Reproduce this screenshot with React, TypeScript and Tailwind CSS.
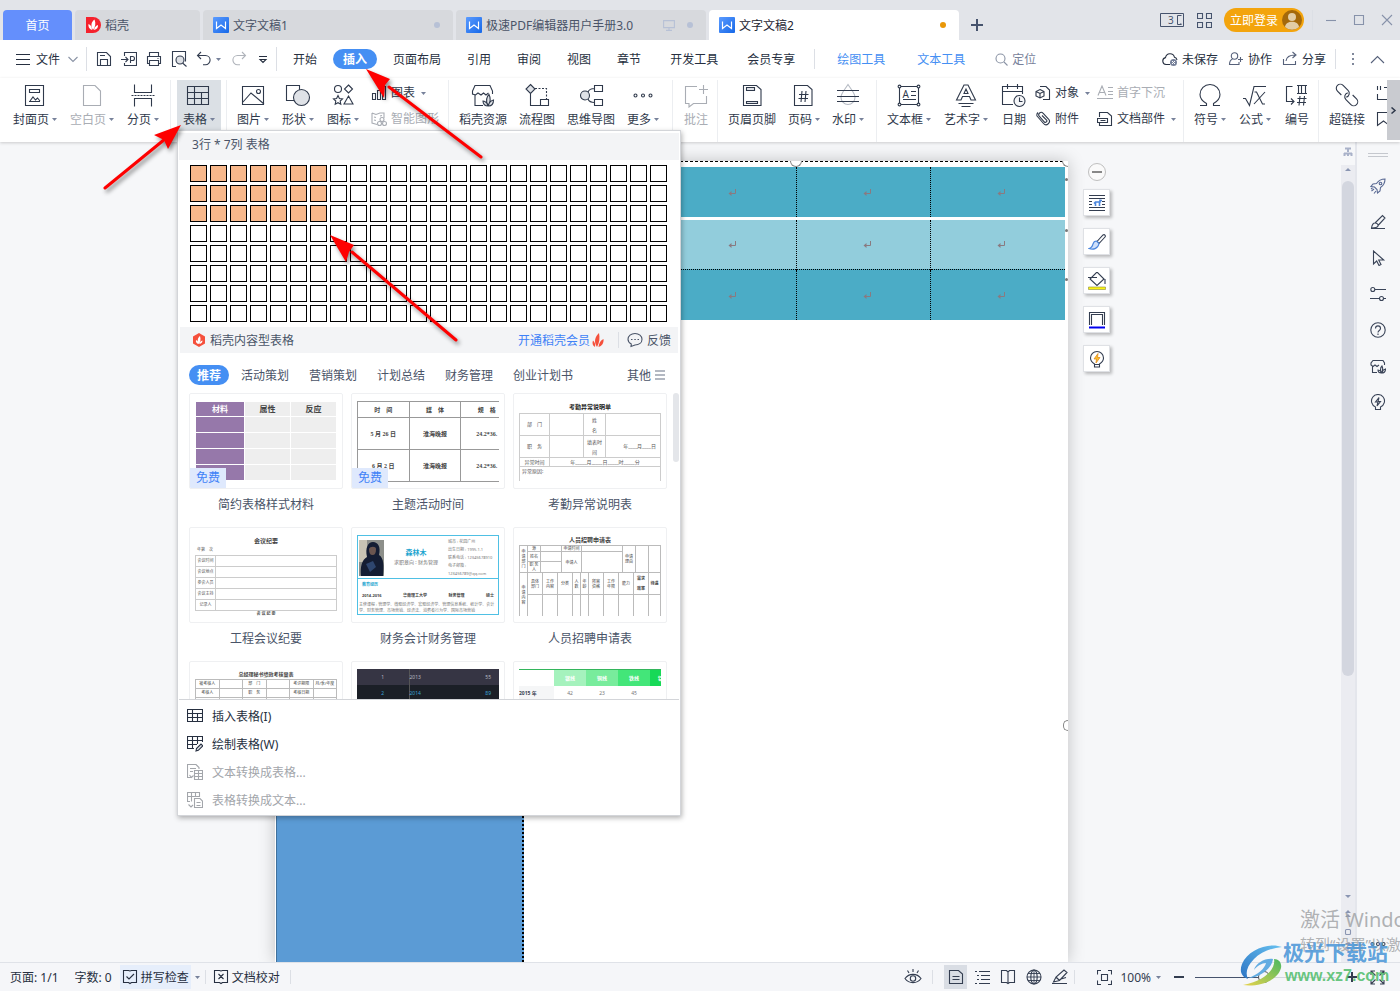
import { useState, type ReactNode } from "react";

const COLS = 24;
const ROWS = 8;

interface IconProps {
  size?: number;
  className?: string;
  children: ReactNode;
}

function Icon({ size = 16, className = "", children }: IconProps) {
  return (
    <svg
      width={size}
      height={size}
      viewBox={`0 0 ${size} ${size}`}
      fill="none"
      stroke="currentColor"
      strokeWidth={1.1}
      className={`shrink-0 ${className}`}
      aria-hidden="true"
    >
      {children}
    </svg>
  );
}

function Caret({ className = "" }: { className?: string }) {
  return (
    <svg width="5" height="3" viewBox="0 0 5 3" className={`shrink-0 ${className}`} aria-hidden="true">
      <path d="M0 0h5L2.5 3z" fill="#77819a" />
    </svg>
  );
}

function Divider({ className = "h-5" }: { className?: string }) {
  return <span className={`w-px shrink-0 bg-[#dcdfe5] ${className}`} />;
}

/* ---------- title bar ---------- */

function WpsLogo() {
  return (
    <svg width="16" height="16" viewBox="0 0 16 16" className="shrink-0" aria-hidden="true">
      <defs>
        <linearGradient id="wps" x1="0" y1="0" x2="1" y2="1">
          <stop offset="0" stopColor="#5b9bff" />
          <stop offset="1" stopColor="#1668e8" />
        </linearGradient>
      </defs>
      <rect width="16" height="16" rx="1" fill="url(#wps)" />
      <path d="M3.500 4.500v7L8 8l4.500 3.500v-7" fill="none" stroke="#fff" strokeWidth="1.2" />
    </svg>
  );
}

function DocerLogo() {
  return (
    <svg width="16" height="16" viewBox="0 0 16 16" className="shrink-0" aria-hidden="true">
      <path d="M1 0h7a8 8 0 0 1 0 16H1z" fill="#f5222d" />
      <path d="M8 13C5.500 9 6 5 9.500 2.500 11 6 10.500 10 8 13zM7 13C4 12 3 9.500 3.500 7 6 8 7 10 7 13zM9 13c.3-2.500 1.500-4 4-5 .2 2.500-1 4.500-4 5z" fill="#fff" />
    </svg>
  );
}

function TitleBar() {
  return (
    <header className="flex h-10 shrink-0 items-end gap-[3px] bg-[#e2e4e9] pl-[3px] text-xs/[17px] text-[#4a5468]">
      <button className="h-[30px] w-[69px] shrink-0 rounded-t bg-[#648ffc] text-white">首页</button>
      <button className="flex h-[30px] w-[125px] shrink-0 items-center gap-1 rounded-t bg-[#d7d9dd] px-2.5">
        <DocerLogo />稻壳
      </button>
      <button className="flex h-[30px] w-[250px] shrink-0 items-center gap-1 rounded-t bg-[#d7d9dd] px-2.5">
        <WpsLogo />
        文字文稿1
        <span className="mr-[3px] ml-auto size-1.5 rounded-full bg-[#b7c1d6]" />
      </button>
      <button className="flex h-[30px] w-[250px] shrink-0 items-center gap-1 rounded-t bg-[#d7d9dd] px-2.5">
        <WpsLogo />
        极速PDF编辑器用户手册3.0
        <Icon size={12} className="ml-auto text-[#b7c1d6]">
          <path d="M.6 1.600h10.800v7H.6zM6 9v2M3 11.400h6" />
        </Icon>
        <span className="mr-[3px] ml-2 size-1.5 rounded-full bg-[#b7c1d6]" />
      </button>
      <button className="flex h-[30px] w-[250px] shrink-0 items-center gap-1 rounded-t bg-white px-2.5 text-[#1f2633]">
        <WpsLogo />
        文字文稿2
        <span className="mr-[3px] ml-auto size-1.5 rounded-full bg-[#e99708]" />
      </button>
      <button aria-label="新建" className="ml-[9px] flex h-[30px] items-center text-[#46536d]">
        <Icon size={12}><path d="M6 0v12M0 6h12" strokeWidth="2" /></Icon>
      </button>
      <div className="ml-auto flex h-full shrink-0 items-center pr-[7px] text-[#46536d]">
        <button aria-label="窗口" className="mr-3">
          <svg width="25" height="16" viewBox="0 0 25 16" fill="none" stroke="currentColor" aria-hidden="true">
            <path d="M.5 1.500h23v13H.5zM21.500 3.500h-4v9h4M20 12h1.500" />
            <text x="8" y="12" fontSize="10" fill="currentColor" stroke="none">3</text>
          </svg>
        </button>
        <button aria-label="应用" className="mr-3">
          <Icon size={15}>
            <path d="M.5.5h5v5h-5zM9.500.5h5v5h-5zM.5 9.500h5v5h-5zM9.500 9.500h5v5h-5z" />
          </Icon>
        </button>
        <button className="flex h-6 items-center gap-1 rounded-full bg-[#f3a40d] pr-0.5 pl-1.5 text-white">
          立即登录
          <svg width="20" height="20" viewBox="0 0 20 20" aria-hidden="true">
            <circle cx="10" cy="10" r="10" fill="#a4690b" />
            <circle cx="10" cy="7" r="4" fill="#e2cda6" />
            <path d="M3 17c.5-7 13.500-7 14 0a10 10 0 0 1-14 0z" fill="#e2cda6" />
          </svg>
        </button>
        <Divider className="mr-3 ml-2 h-5 bg-[#c8ccd4]" />
        <button aria-label="最小化" className="mr-4 text-[#8792aa]"><Icon size={12}><path d="M1 6.500h10" /></Icon></button>
        <button aria-label="最大化" className="mr-4 text-[#8792aa]"><Icon size={12}><path d="M1.500 1.500h9v9h-9z" /></Icon></button>
        <button aria-label="关闭" className="text-[#8792aa]"><Icon size={12}><path d="m1 1 10 10M11 1 1 11" /></Icon></button>
      </div>
    </header>
  );
}

/* ---------- menu row ---------- */

const MENUS = ["页面布局", "引用", "审阅", "视图", "章节"];
const MORE_MENUS = ["开发工具", "会员专享"];

function MenuRow() {
  return (
    <nav className="flex h-[38px] shrink-0 items-center bg-white text-xs/[17px] text-[#262f40]">
      <button className="flex items-center pl-4">
        <Icon size={14} className="mr-1.5"><path d="M0 2.500h14M0 7.500h14M0 12.500h14" /></Icon>
        文件
        <Icon size={10} className="ml-2 text-[#8a93a5]"><path d="m.5 3 4.500 4.500L9.500 3" /></Icon>
      </button>
      <Divider className="mr-[9px] ml-2 h-6" />
      <div className="flex items-center gap-[9px] text-[#333d50]">
        <button aria-label="保存">
          <Icon><path d="M1.500 1.500h9l4 4v9h-13zM4.500 14V8.500h7V14M4 4.500h5" /></Icon>
        </button>
        <button aria-label="输出PDF">
          <Icon><path d="M3.500 5V1.500h12v13h-12V12M0 8.500h7M4.500 6 7 8.500 4.500 11M9.500 12V5.500h2a2 2 0 0 1 0 4h-2" /></Icon>
        </button>
        <button aria-label="打印">
          <Icon><path d="M3.500 5V1.500h9V5M3.500 12.500h-2v-7h13v7h-2M3.500 9.500h9v5h-9zM11.500 7.500h1" /></Icon>
        </button>
        <button aria-label="打印预览">
          <Icon>
            <path d="M5 15.500H1.500V.5h13v10M11.500 12l4 3.500" />
            <circle cx="9" cy="9" r="4" fill="#dde0e5" />
          </Icon>
        </button>
        <button aria-label="撤销"><Icon><path d="M5 1 1.500 4.500 5 8M2 4.500h7.500a4.600 4.600 0 0 1 0 9.200H7" /></Icon></button>
      </div>
      <Caret className="ml-1" />
      <button aria-label="恢复" className="ml-2.5 text-[#b0b4bb]">
        <Icon><path d="m11 1 3.500 3.500L11 8M14 4.500H6.500a4.600 4.600 0 0 0 0 9.200H9" /></Icon>
      </button>
      <button aria-label="自定义" className="ml-[11px]"><Icon size={10}><path d="M1 2.500h8M2 5.500h6L5 8.500z" /></Icon></button>
      <Divider className="mr-1 ml-2 h-6" />
      <button className="px-3">开始</button>
      <button className="mx-1 h-5 rounded-full bg-[#458ff3] px-2.5 font-bold text-white">插入</button>
      {MENUS.map((m, i) => (
        <button key={m} className={i === 0 ? "pr-[13px] pl-3 whitespace-nowrap" : "px-[13px] whitespace-nowrap"}>{m}</button>
      ))}
      {MORE_MENUS.map((m) => (
        <button key={m} className="ml-[3px] px-[13px] whitespace-nowrap">{m}</button>
      ))}
      <Divider className="mx-[6px] h-5" />
      <button className="px-4 whitespace-nowrap text-[#458ff3]">绘图工具</button>
      <button className="px-4 whitespace-nowrap text-[#458ff3]">文本工具</button>
      <label className="ml-3.5 flex items-center gap-1 text-[#8a93a5]">
        <Icon size={13}><circle cx="5.500" cy="5.500" r="4.500" /><path d="m9 9 3.500 3.500" /></Icon>
        <input aria-label="定位" placeholder="定位" className="w-12 bg-transparent outline-none placeholder:text-[#77819a]" />
      </label>
      <div className="ml-auto flex shrink-0 items-center pr-[15px] whitespace-nowrap">
        <button className="flex items-center gap-1">
          <Icon>
            <path d="M8 13.500H4A3.500 3.500 0 0 1 3.500 6.600a4.600 4.600 0 0 1 9-.3A3.500 3.500 0 0 1 15 9" />
            <circle cx="11.500" cy="11.500" r="3.500" fill="#77819a" stroke="none" />
            <path d="m10 10 3 3M13 10l-3 3" stroke="#fff" strokeWidth="1" />
          </Icon>
          未保存
        </button>
        <button className="ml-[10px] flex items-center gap-1">
          <Icon className="text-[#56617a]">
            <circle cx="6.500" cy="5" r="3.200" />
            <path d="M4.500 8C2 9 1.500 11 1.500 13.500h9.500V11M12.500 6v5M10 8.500h5" />
          </Icon>
          协作
        </button>
        <button className="ml-[10px] flex items-center gap-1">
          <Icon className="text-[#56617a]">
            <path d="M1.500 8v5.500h12V10M4 10c.5-4 3-6 9-6M10.500 1 14 4l-3.500 3" />
          </Icon>
          分享
        </button>
        <Divider className="ml-[9px] h-5" />
        <button aria-label="更多" className="mx-[10px] text-[#56617a]">
          <Icon size={14}>
            <g fill="currentColor" stroke="none">
              <circle cx="7" cy="2" r="1" /><circle cx="7" cy="7" r="1" /><circle cx="7" cy="12" r="1" />
            </g>
          </Icon>
        </button>
        <button aria-label="收起" className="text-[#56617a]"><Icon size={15}><path d="m1 11 6.500-6.500L14 11" /></Icon></button>
      </div>
    </nav>
  );
}

/* ---------- ribbon ---------- */

const G = "#dfe2e7";

const big: Record<string, ReactNode> = {
  cover: <path d="M3.500 3.500h18v20h-18zM7.500 7.500h10v3h-10zM7 19.500h11M8 19l3-4 2.500 3 2-2 2.500 3" />,
  blank: <path d="M4.500 3.500H16l5.500 5.500v14.500h-17z" />,
  pageBreak: <><path d="M4.500 2.500v8h17v-8M4.500 24.500v-8h17v8" /><path d="M1.500 13.500h24" strokeDasharray="2 1" /></>,
  table: <path d="M1.500 4.500h21v18h-21zM1.500 10.500h21M1.500 16.500h21M8.500 4.500v18M15.500 10.500v12" />,
  picture: <><path d="M2.500 4.500h21v18h-21zM3 20l8-9 13 11" /><circle cx="18.500" cy="9.500" r="2" /></>,
  shapes: <><path d="M1.500 3.500h13v15h-13z" /><circle cx="16.500" cy="15.500" r="8" fill={G} /></>,
  icons: (
    <>
      <circle cx="8" cy="7" r="3.500" />
      <path d="m18.500 3 4 4-4 4-4-4zM8 13.500l1.400 3 3.100.4-2.300 2.100.6 3.200L8 20.700l-2.800 1.500.6-3.200-2.300-2.100 3.100-.4zM18.500 14l4.500 8h-9z" />
    </>
  ),
  store: (
    <>
      <path d="M13 23.500H5V13M22.500 12V9L20 3.500H5L2.500 9v3l3 1 2.500-2 3 2 2.500-2 2.500 2 2.500-2" />
      <path d="M17.500 23c-1.500-4-1-8 1.500-10.500 1.500 3 1.500 7-.5 10.500-2-2.500-4-4-5.500-4 0 3 2 5 5.500 5 3 0 5-2 5-6-2.500.5-4 2-5 5z" fill={G} />
    </>
  ),
  flow: (
    <>
      <path d="m6.500 2.500 4.500 4.500-4.500 4.500L2 7z" fill={G} />
      <path d="M11 6.500h11.500v11" strokeDasharray="2 1.500" />
      <path d="M6.500 11.500v12h10M16.500 17.500h8v6h-8z" />
    </>
  ),
  mind: (
    <>
      <circle cx="7" cy="13.500" r="4.500" fill={G} />
      <path d="M16.500 3.500h8v6h-8zM16.500 17.500h8v6h-8zM16.500 6.500C13 6.500 11 7.500 10 10M16.500 20.500C13 20.500 11 19.500 10 17" />
    </>
  ),
  more: <><circle cx="5.500" cy="13.500" r="1.500" /><circle cx="13" cy="13.500" r="1.500" /><circle cx="20.500" cy="13.500" r="1.500" /></>,
  comment: <path d="M14 4.500H2.500v17H6V25l4.500-3.500h13V14M20.500 3v9M16 7.500h9" />,
  headfoot: <><path d="M4.500 3.500h13l4.500 4v16H4.500z" /><path d="M7.500 5.500h8v3h-8zM7.500 19.500h11v2h-11z" fill={G} /></>,
  pageNum: <path d="M3.500 3.500h13l4.500 4v16H3.500zM8 12.500h9.500M7.500 16.500H17M11 9l-1 11M15 9l-1 11" />,
  watermark: (
    <>
      <path d="M13 2.500c3 5 7 8.500 7 13a7 7 0 0 1-14 0c0-4.500 4-8 7-13z" stroke="#b5bac3" />
      <path d="M2 8.500h22M2 14.500h22M2 19.500h22" />
    </>
  ),
  textbox: (
    <>
      <path d="M3.500 4.500h19v18h-19zM15 9.500h5M15 13.500h5M7 17.500h13" />
      <g fill="#fff"><circle cx="3.500" cy="4.500" r="1.400" /><circle cx="22.500" cy="4.500" r="1.400" /><circle cx="3.500" cy="22.500" r="1.400" /><circle cx="22.500" cy="22.500" r="1.400" /></g>
      <text x="6.500" y="15.500" fontSize="10" fill="currentColor" stroke="none">A</text>
    </>
  ),
  wordart: (
    <>
      <path d="M3.500 18 11 3h4l7.500 15H18l-1.500-3.500h-7L8 18zM11 11.500h4L13 7z" />
      <path d="M5.500 21.500h15M8.500 24.500h9" />
    </>
  ),
  date: (
    <>
      <path d="M12 22.500H1.500v-18h20V12M1.500 9.500h20M6.500 2v5M16.500 2v5" />
      <circle cx="18.500" cy="19" r="5.500" fill="#f5f6f8" />
      <path d="M18.500 15.500v4h3" />
    </>
  ),
  omega: <path d="M3 23.500h6.500v-2C5 19 3 16.500 3 12.500a10 10 0 0 1 20 0c0 4-2 6.500-6.500 9v2H23" />,
  formula: <path d="M1 16.500h2.500l4 7 4.500-19h12M12.500 10h2l6 12h2.500M23 10l-11 12" />,
  numbering: (
    <path d="M8.500 4.500h-6v15H10M7 16.500l3 3-3 3M13 3.500h10M13 11.500h10M14.500 3.500v8M17.500 3.500v8M21.500 3.500v8M13.500 16.500h9M13 20.500h9M16 14l-1 9.500M20.500 14l-1 9.500" />
  ),
  link: (
    <g transform="rotate(45 13 13)">
      <path d="M9 17H3.500a4 4 0 0 1 0-8h7a4 4 0 0 1 3.500 6" />
      <path d="M17 9h5.500a4 4 0 0 1 0 8h-7a4 4 0 0 1-3.500-6" />
    </g>
  ),
};

interface BigButtonProps {
  icon: string;
  label: string;
  caret?: boolean;
  disabled?: boolean;
  active?: boolean;
  onClick?: () => void;
}

function BigButton({ icon, label, caret, disabled, active, onClick }: BigButtonProps) {
  return (
    <button
      disabled={disabled}
      onClick={onClick}
      className={[
        "flex h-[50px] shrink-0 flex-col items-center px-[6px] pt-[2px]",
        active ? "bg-[#dbe0e5]" : "",
        disabled ? "text-[#a9adb4]" : "text-[#2f394b]",
      ].join(" ")}
    >
      <Icon size={26}>{big[icon]}</Icon>
      <span className="mt-[3px] flex items-center gap-[3px] whitespace-nowrap">
        {label}
        {caret && <Caret />}
      </span>
    </button>
  );
}

function SmallButton({ label, caret, disabled, children }: { label: string; caret?: boolean; disabled?: boolean; children: ReactNode }) {
  return (
    <button
      disabled={disabled}
      className={[
        "flex h-[26px] items-center gap-[4px] leading-4 whitespace-nowrap",
        disabled ? "text-[#a9adb4]" : "text-[#2f394b]",
      ].join(" ")}
    >
      <Icon>{children}</Icon>
      {label}
      {caret && <Caret className="ml-0.5" />}
    </button>
  );
}

function Ribbon() {
  const [open, setOpen] = useState(true);
  return (
    <div className="relative z-20 flex h-16 shrink-0 bg-white pt-[2px] text-xs/[17px] shadow-[0_1px_3px_rgba(0,0,0,0.18)]">
      <div className="flex w-[171px] shrink-0 gap-px border-r border-[#eceef1] pl-[7px]">
        <BigButton icon="cover" label="封面页" caret />
        <BigButton icon="blank" label="空白页" caret disabled />
        <BigButton icon="pageBreak" label="分页" caret />
      </div>
      <div className="relative flex w-[56px] shrink-0 border-r border-[#eceef1] pl-[6px]">
        <BigButton icon="table" label="表格" caret active onClick={() => setOpen(!open)} />
        {open && <TablePanel />}
      </div>
      <div className="flex w-[222px] shrink-0 gap-px border-r border-[#eceef1] pl-[4px]">
        <BigButton icon="picture" label="图片" caret />
        <BigButton icon="shapes" label="形状" caret />
        <BigButton icon="icons" label="图标" caret />
        <div className="ml-[5px]">
          <SmallButton label="图表" caret><path d="M1.500 8.500h3v6h-3zM6.500 5.500h3v9h-3zM11.500 1.500h3v13h-3z" /></SmallButton>
          <SmallButton label="智能图形" disabled>
            <path d="M1 2l4 1.500L9 2h4v5M1 2v10l5 1.500M3 6l2 .5M3 9l2 .5M9 5l2-.5" />
            <circle cx="11" cy="8.500" r="2" /><circle cx="8.500" cy="12.500" r="2" /><circle cx="13.500" cy="12.500" r="2" />
          </SmallButton>
        </div>
      </div>
      <div className="flex w-[224px] shrink-0 border-r border-[#eceef1] pl-[4px]">
        <BigButton icon="store" label="稻壳资源" />
        <BigButton icon="flow" label="流程图" />
        <BigButton icon="mind" label="思维导图" />
        <BigButton icon="more" label="更多" caret />
      </div>
      <div className="flex w-[45px] shrink-0 border-r border-[#eceef1] pl-[4px]">
        <BigButton icon="comment" label="批注" disabled />
      </div>
      <div className="flex w-[159px] shrink-0 border-r border-[#eceef1] pl-[4px]">
        <BigButton icon="headfoot" label="页眉页脚" />
        <BigButton icon="pageNum" label="页码" caret />
        <BigButton icon="watermark" label="水印" caret />
      </div>
      <div className="flex w-[307px] shrink-0 gap-px border-r border-[#eceef1] pl-[4px]">
        <BigButton icon="textbox" label="文本框" caret />
        <BigButton icon="wordart" label="艺术字" caret />
        <BigButton icon="date" label="日期" />
        <div className="ml-px">
          <SmallButton label="对象" caret>
            <path d="M5 1.500h6l3.500 3.500v9.500H8" />
            <path d="m5 4.500 4 2v4.500l-4 2-4-2V6.500zM1 6.500l4 2 4-2M5 8.500V13" fill="#fff" />
          </SmallButton>
          <SmallButton label="附件">
            <path d="m2 5 6.500 7.500a3.300 3.300 0 0 0 5-4.500L8 2.200a2.400 2.400 0 0 0-3.600 3.200l5 5.600a1.500 1.500 0 0 0 2.200-2L7 4.500M2 5a3.500 3.500 0 0 1 1-3.500" />
          </SmallButton>
        </div>
        <div className="ml-[6px]">
          <SmallButton label="首字下沉" disabled>
            <path d="M1 10.500 5 1l4 9.500M2.500 7.500h5M11 2.500h5M11 6.500h5M11 9.500h5M0 13.500h16" />
          </SmallButton>
          <SmallButton label="文档部件" caret>
            <path d="M2.500 6V1.500h8L14.500 5v9.500h-12V12M.5 7.500h10v4H.5zM3.500 9.500h5" />
          </SmallButton>
        </div>
      </div>
      <div className="flex w-[135px] shrink-0 gap-px border-r border-[#eceef1] pl-[4px]">
        <BigButton icon="omega" label="符号" caret />
        <BigButton icon="formula" label="公式" caret />
        <BigButton icon="numbering" label="编号" />
      </div>
      <div className="flex min-w-0 flex-1 overflow-hidden pl-[4px]">
        <BigButton icon="link" label="超链接" />
        <div className="ml-1 min-w-0 flex-1 overflow-hidden text-[#2f394b]">
          <button aria-label="引用" className="flex h-[26px] items-center">
            <Icon><path d="M2.500 1v4M5.500 1v4M2.500 9v5.500h12M9 2.500h6" /></Icon>
          </button>
          <button aria-label="书签" className="flex h-[26px] items-center">
            <Icon><path d="M2.500 1.500h12v13l-6-4.500-6 4.500z" /></Icon>
          </button>
        </div>
      </div>
      <button aria-label="向右" className="flex h-[60px] w-[13px] shrink-0 items-center justify-center bg-[#c9cbd0] text-[#2f394b]">
        <Icon size={7}><path d="m1.500.5 3.500 3-3.500 3" strokeWidth="1.500" /></Icon>
      </button>
    </div>
  );
}

/* ---------- table drop-down ---------- */

const TABS = ["活动策划", "营销策划", "计划总结", "财务管理", "创业计划书"];

function MaterialThumb() {
  return (
    <table className="h-[80px] w-full table-fixed border-separate border-spacing-px text-center text-[8px] leading-none font-bold text-[#444]">
      <tbody>
        <tr>
          <td className="w-[48px] bg-[#9678aa] p-0 text-white">材料</td>
          <td className="bg-[#eee] p-0">属性</td>
          <td className="bg-[#eee] p-0">反应</td>
        </tr>
        {[0, 1, 2, 3].map((i) => (
          <tr key={i} className="h-[15px]">
            <td className="bg-[#9678aa] p-0" /><td className="bg-[#eee] p-0" /><td className="bg-[#eee] p-0" />
          </tr>
        ))}
      </tbody>
    </table>
  );
}

function ScheduleThumb() {
  const rows = [
    ["时　间", "媒　体", "规　格"],
    ["5 月 26 日", "淮海晚报", "24.2*36."],
    ["6 月 2 日", "淮海晚报", "24.2*36."],
  ];
  return (
    <table className="h-[80px] w-[156px] table-fixed border-collapse text-center font-['Liberation_Serif','Noto_Sans_CJK_SC',serif] text-[6px] leading-none font-bold text-[#444]">
      <tbody>
        {rows.map((r, i) => (
          <tr key={i} className={i === 0 ? "h-[16px]" : "h-[32px]"}>
            {r.map((c) => <td key={c} className="border border-[#999] p-0">{c}</td>)}
          </tr>
        ))}
      </tbody>
    </table>
  );
}

function AttendanceThumb() {
  return (
    <div className="text-center text-[5px] leading-none text-[#555]">
      <p className="mb-[2px] pt-[2px] text-[6px] leading-[8px] font-bold text-[#222]">考勤异常说明单</p>
      <table className="h-[68px] w-full table-fixed border-collapse">
        <tbody>
          <tr className="h-[22px]">
            <td className="w-[30px] border border-[#ccc] p-0">部　门</td>
            <td className="w-[34px] border border-[#ccc] p-0" />
            <td className="w-[22px] border border-[#ccc] p-0 leading-[10px]">姓<br />名</td>
            <td className="border border-[#ccc] p-0" />
          </tr>
          <tr className="h-[22px]">
            <td className="border border-[#ccc] p-0">职　务</td>
            <td className="border border-[#ccc] p-0" />
            <td className="border border-[#ccc] p-0 leading-[10px]">填表时<br />间</td>
            <td className="border border-[#ccc] p-0 pr-1 text-right">年____月____日</td>
          </tr>
          <tr className="h-[9px]">
            <td className="border border-[#ccc] p-0">异常时间</td>
            <td colSpan={3} className="border border-[#ccc] p-0">年_____月_____日_____时_____分</td>
          </tr>
          <tr>
            <td colSpan={4} className="border-x border-[#ccc] p-[2px] text-left align-top">异常原因:</td>
          </tr>
        </tbody>
      </table>
    </div>
  );
}

function MeetingThumb() {
  return (
    <div className="text-[4px] leading-none text-[#555]">
      <p className="pt-[2px] text-center text-[6px] leading-[8px] font-bold text-[#444]">会议纪要</p>
      <p className="py-[3px] pl-[2px]">年第　次</p>
      <table className="w-full table-fixed border-collapse text-center">
        <tbody>
          {["会议时间", "会议地点", "参会人员", "会议主持", "记录人"].map((t) => (
            <tr key={t} className="h-[11px]">
              <td className="w-[20px] border border-[#ccc] p-0">{t}</td>
              <td className="border border-[#ccc] p-0" />
            </tr>
          ))}
        </tbody>
      </table>
      <p className="pt-[1px] text-center font-bold">会 议 纪 要</p>
    </div>
  );
}

function ResumeThumb() {
  return (
    <div className="h-[80px] border border-[#4fc0e4] text-[4px] leading-none text-[#777]">
      <div className="flex h-[43px] border-b border-[#4fc0e4]">
        <svg width="25" height="36" viewBox="0 0 25 36" className="mt-1 ml-px" aria-hidden="true">
          <rect width="25" height="36" fill="#8d8f8a" />
          <path d="M0 0h8v22H0z" fill="#c9c4b4" />
          <path d="M2 36c-1-10 1-16 6-19C6 8 9 2 14 2s8 5 6 13c5 3 5 11 4 21z" fill="#141d33" />
          <path d="M10 9c1-3 7-3 7 0 0 4-1 6-3.500 6S10 13 10 9z" fill="#6b5650" />
          <path d="m7 24 7-3 3 6-6 5z" fill="#2e466f" />
        </svg>
        <div className="flex-1 pt-[13px] text-center">
          <p className="text-[7px] leading-[8px] font-bold text-[#1ba4cf]">森林木</p>
          <p className="pt-[3px] text-[5px]">求职意向 : 财务管理</p>
        </div>
        <div className="w-[50px] pt-[2px] leading-[8px] whitespace-nowrap">
          <p>城市 : 花园广州</p><p>出生日期 : 1995.1.1</p><p>联系电话 : 12345678910</p><p>电子邮箱 :</p><p>123456789@qq.com</p>
        </div>
      </div>
      <p className="pt-[4px] pl-1 font-bold text-[#1ba4cf]">教育经历</p>
      <p className="flex justify-between px-1 pt-[7px] font-bold text-[#444]">
        <span>2014-2016</span><span>华南理工大学</span><span>财务管理</span><span>硕士</span>
      </p>
      <p className="px-px pt-[4px] leading-[6px]">主修课程 : 管理学、微观经济学、宏观经济学、管理信息系统、统计学、会计学、财务管理、市场营销、经济法、消费者行为学、国际市场营销</p>
    </div>
  );
}

function RecruitThumb() {
  const cell = "border border-[#bbb] p-0";
  return (
    <div className="text-[4px] leading-[5px] text-[#444]">
      <p className="pt-px text-center text-[6px] leading-[9px] font-bold">人员招聘申请表</p>
      <table className="w-full table-fixed border-collapse text-center">
        <tbody>
          <tr className="h-[5px]">
            <td rowSpan={3} className={`w-[8px] ${cell}`}>申请部门</td>
            <td className={`w-[13px] ${cell}`}>源</td>
            <td className={`w-[21px] ${cell}`} />
            <td className={`w-[20px] ${cell}`}>申请时间</td>
            <td className={cell} />
            <td rowSpan={3} className={`w-[13px] ${cell}`}>申请<br />理由</td>
            <td rowSpan={3} className={`w-[13px] ${cell}`} />
            <td rowSpan={3} className={`w-[12px] ${cell}`} />
          </tr>
          <tr className="h-[10px]">
            <td className={cell}>姓名</td>
            <td className={cell} />
            <td rowSpan={2} className={cell}>申请人</td>
            <td rowSpan={2} className={cell} />
          </tr>
          <tr className="h-[10px]">
            <td className={cell}>职 务人</td>
            <td className={cell} />
          </tr>
        </tbody>
      </table>
      <table className="-mt-px w-full table-fixed border-collapse text-center">
        <tbody>
          <tr className="h-[22px]">
            <td rowSpan={2} className={`w-[8px] ${cell}`}>申请内容</td>
            <td className={cell}>具体<br />部门</td>
            <td className={cell}>工作<br />内容</td>
            <td className={cell}>分类</td>
            {["人数", "年龄"].map((t) => <td key={t} className={`w-[8px] ${cell}`}>{t}</td>)}
            <td className={cell}>所需<br />资格</td>
            <td className={cell}>工作<br />年限</td>
            <td className={cell}>能力</td>
            <td className={`font-bold leading-[10px] ${cell}`}>需求<br />效率</td>
            <td className={`w-[12px] font-bold ${cell}`}>待遇</td>
          </tr>
          <tr className="h-[22px]">
            {Array.from({ length: 10 }, (_, i) => <td key={i} className={cell} />)}
          </tr>
        </tbody>
      </table>
    </div>
  );
}

function ReviewThumb() {
  const rows = [
    ["被考核人", "", "部　门", "", "考评期限", "月/季/年度"],
    ["考核人", "", "职　务", "", "考核日期", ""],
    ["", "", "", "", "", ""],
  ];
  return (
    <div className="text-[4px] leading-none text-[#444]">
      <p className="pt-[1px] text-center text-[5px] leading-[9px] font-bold">总经理秘书绩效考核量表</p>
      <table className="w-full table-fixed border-collapse text-center">
        <tbody>
          {rows.map((r, i) => (
            <tr key={i} className="h-[9px]">
              {r.map((c, j) => <td key={j} className="border border-[#bbb] p-0">{c}</td>)}
            </tr>
          ))}
        </tbody>
      </table>
    </div>
  );
}

function DarkThumb() {
  return (
    <table className="h-[32px] w-full table-fixed border-collapse text-[5px] leading-none">
      <tbody>
        <tr className="bg-[#363544] text-[#b9b9c3]">
          <td className="w-[52px] border-r border-[#555] p-0 text-center">1</td>
          <td className="p-0">2013</td>
          <td className="p-0 pr-2 text-right">55</td>
        </tr>
        <tr className="bg-[#1b1f27] text-[#3aa1d5]">
          <td className="border-r border-[#555] p-0 text-center">2</td>
          <td className="p-0">2014</td>
          <td className="p-0 pr-2 text-right">89</td>
        </tr>
      </tbody>
    </table>
  );
}

function GreenThumb() {
  return (
    <table className="h-[32px] w-[163px] table-fixed border-collapse border-t border-[#33b55c] text-center text-[5px] leading-none">
      <tbody>
        <tr className="font-bold text-white">
          <td className="w-[35px] p-0" />
          <td className="bg-[#a5f2bd] p-0">银线</td>
          <td className="bg-[#78ec9c] p-0">铜线</td>
          <td className="bg-[#43e679] p-0">铁线</td>
          <td className="bg-[#17d957] p-0 pl-2 text-left">铝</td>
        </tr>
        <tr className="text-[#777]">
          <td className="bg-[#f5f6f7] p-0 text-left font-bold text-[#39424f]">2015 年</td>
          <td className="p-0">42</td><td className="p-0">23</td><td className="p-0">45</td><td />
        </tr>
      </tbody>
    </table>
  );
}

const TEMPLATES = [
  { name: "简约表格样式材料", thumb: <MaterialThumb />, free: true },
  { name: "主题活动时间", thumb: <ScheduleThumb />, free: true },
  { name: "考勤异常说明表", thumb: <AttendanceThumb /> },
  { name: "工程会议纪要", thumb: <MeetingThumb /> },
  { name: "财务会计财务管理", thumb: <ResumeThumb /> },
  { name: "人员招聘申请表", thumb: <RecruitThumb /> },
  { name: "", thumb: <ReviewThumb /> },
  { name: "", thumb: <DarkThumb /> },
  { name: "", thumb: <GreenThumb /> },
];

function PanelItem({ label, disabled, children }: { label: string; disabled?: boolean; children: ReactNode }) {
  return (
    <button
      disabled={disabled}
      className={`flex h-7 w-full items-center gap-[9px] pl-2 ${disabled ? "text-[#a3a6ab]" : "text-[#262f40]"}`}
    >
      <Icon>{children}</Icon>
      {label}
    </button>
  );
}

function TablePanel() {
  const [size, setSize] = useState({ rows: 3, cols: 7 });
  return (
    <div className="absolute top-[50px] left-[6px] w-[504px] border border-[#d3d5d9] bg-white px-px pt-[2px] text-[#4a5468] shadow-[1px_2px_5px_rgba(0,0,0,0.3)]">
      <p className="h-[27px] bg-[#f3f4f6] pl-[13px] leading-6">
        {size.rows}行 * {size.cols}列 表格
      </p>
      <div className="grid w-fit grid-cols-[repeat(24,17px)] gap-[3px] py-[5px] pl-[11px]">
        {Array.from({ length: ROWS * COLS }, (_, i) => {
          const r = Math.floor(i / COLS) + 1;
          const c = (i % COLS) + 1;
          const on = r <= size.rows && c <= size.cols;
          return (
            <button
              key={i}
              aria-label={`${r}行${c}列`}
              onClick={() => setSize({ rows: r, cols: c })}
              className={`h-[17px] border border-black ${on ? "bg-[#f8b88b]" : "bg-white"}`}
            />
          );
        })}
      </div>

      <div className="mx-px flex h-[26px] items-center bg-[#f3f4f6] pr-[7px] pl-3">
        <svg width="14" height="14" viewBox="0 0 14 14" aria-hidden="true">
          <path d="m7 0 6 3.500v7L7 14l-6-3.500v-7z" fill="#f5503c" />
          <path d="M7 11C5 8 5.500 5 8 3c1 3 .5 6-1 8zM6.500 11C4.500 10.500 3.500 9 4 7c2 1 2.500 2 2.500 4zM7.500 11c.3-2 1-3 3-3.500 0 2-1 3-3 3.500z" fill="#fff" />
        </svg>
        <span className="ml-1">稻壳内容型表格</span>
        <a href="#vip" className="ml-auto flex items-center gap-px text-[#3f82f7]">
          开通稻壳会员
          <svg width="14" height="14" viewBox="0 0 14 14" aria-hidden="true">
            <path d="M6 14C2.500 9 4 3.500 8 0c1 5 .5 10-2 14zM4 14C1.500 12.500 1 10 2 7.500 4 9.500 4.500 11.500 4 14zM7.500 14c.5-4 2-6.500 5-8 .5 4-1.500 7-5 8z" fill="#f5503c" />
          </svg>
        </a>
        <Divider className="mr-2 ml-[13px] h-4" />
        <button className="flex items-center gap-1">
          <Icon>
            <path d="M8 1.500c4 0 7 2.400 7 5.800S12 13 8 13l-4 1.500.3-2.500C2.300 11 1 9.300 1 7.300 1 4 4 1.500 8 1.500z" />
            <path d="M4 7.500h1.500M7.300 7.500h1.500M10.500 7.500H12" />
          </Icon>
          反馈
        </button>
      </div>

      <div className="mt-3 flex items-center gap-5 pr-[14px] pl-[10px]">
        <button className="-mr-2 h-5 rounded-full bg-[#458ff3] px-2 font-bold text-white">推荐</button>
        {TABS.map((t) => <button key={t}>{t}</button>)}
        <button className="ml-auto flex items-center gap-1">
          其他
          <Icon size={10} className="text-[#9aa1ae]"><path d="M0 1h10M0 5h10M0 9h10" strokeWidth="1.500" /></Icon>
        </button>
      </div>

      <div className="mt-2 flex h-[306px] overflow-hidden pl-[10px]">
        <div className="grid h-fit w-[478px] grid-cols-3 gap-x-2">
          {TEMPLATES.map((t, i) => (
            <figure key={i} className="h-[134px]">
              <div className="relative h-[96px] overflow-hidden rounded-xs border border-[#eff0f2] px-[5px] py-[7px]">
                <div className="h-[81px] overflow-hidden">{t.thumb}</div>
                {t.free && (
                  <span className="absolute bottom-0 left-0 bg-[#dfe9fd] px-1.5 leading-5 text-[#3f82f7]">免费</span>
                )}
              </div>
              <figcaption className="pt-[7px] text-center">{t.name}</figcaption>
            </figure>
          ))}
        </div>
        <div className="ml-auto h-[69px] w-[6px] rounded-full bg-[#e4e6ea]" />
      </div>

      <div className="border-t border-[#d3d5d9] pt-[2px] pb-px">
        <PanelItem label="插入表格(I)">
          <path d="M.5 1.500h15v12H.5zM.5 5.500h15M.5 9.500h15M5.500 1.500v12M10.500 5.500v8" />
        </PanelItem>
        <PanelItem label="绘制表格(W)">
          <path d="M7 12.500H.5v-12h15V6M.5 4.500h15M.5 8.500H10M5.500.5v12M10.500.5V8" />
          <path d="m9 15 .5-2.500L14 8l1.800 1.800-4.500 4.500z" fill="#dfe2e7" />
        </PanelItem>
        <PanelItem label="文本转换成表格..." disabled>
          <path d="M4 13.500H.5v-13H9L12 3.500V5M3 4.500h6M3 7.500h3M2.500 11l2 2.500 2-2M7.500 6.500h8v9h-8zM7.500 9.500h8M7.500 12.500h8M11.500 6.500v9" />
        </PanelItem>
        <PanelItem label="表格转换成文本..." disabled>
          <path d="M3 9.500H.5v-9h12V5M.5 4.500h12M4.500.5v9M8.500.5V5M1.500 12.500l2.500 2.500 2-2M7.500 6.500H13l2.500 2.500v6.500h-8zM9.500 10.500h4M9.500 13.500h4" />
        </PanelItem>
      </div>
    </div>
  );
}

/* ---------- document ---------- */

function Return() {
  return (
    <svg width="8" height="8" viewBox="0 0 8 8" className="mx-auto" fill="none" stroke="#8a7a80" aria-hidden="true">
      <path d="M7.500 0v4.500H1" />
      <path d="M3.500 2v5L.5 4.500z" fill="#8a7a80" stroke="none" />
    </svg>
  );
}

function FloatButton({ label, children }: { label: string; children: ReactNode }) {
  return (
    <button aria-label={label} className="flex size-[27px] items-center justify-center border border-[#dfe1e5] bg-white text-[#333d50] shadow-[2px_2px_3px_rgba(0,0,0,0.25)]">
      <Icon size={18}>{children}</Icon>
    </button>
  );
}

const TABLE_ROWS = [
  "h-[51px] border-b-3 border-b-white bg-[#4bacc6]",
  "h-[51px] border-b border-b-black bg-[#92cddc] [border-bottom-style:dotted]",
  "h-[51px] bg-[#4bacc6]",
];

function Page() {
  return (
    <div className="relative flex w-[793px] flex-col self-stretch border-t border-dashed border-black bg-white shadow-[0_0_16px_rgba(0,0,0,0.22)]">
      <table className="mt-[5px] ml-px w-[789px] table-fixed border-collapse">
        <tbody>
          {TABLE_ROWS.map((tone) => (
            <tr key={tone} className={tone}>
              <td className="w-[118px]" />
              {[0, 1, 2, 3, 4].map((c) => (
                <td key={c} className={`p-0 pt-[2px] pl-[6px] ${c < 4 ? "border-r border-dotted border-r-black" : ""}`}>
                  <Return />
                </td>
              ))}
            </tr>
          ))}
        </tbody>
      </table>
      <div className="ml-px w-[248px] flex-1 border-r-2 border-l border-r-black border-l-[#41719c] bg-[#5b9bd5] [border-right-style:dotted]" />
      <span className="absolute -top-[1px] left-[515px] h-[6px] w-[12px] rounded-b-full border border-t-0 border-[#888] bg-white" />
      <span className="absolute -top-[1px] right-0 size-[6px] rounded-bl-full border-b border-l border-[#888] bg-white" />
      <span className="absolute top-[558px] right-0 h-[11px] w-[5px] rounded-l-full border border-r-0 border-[#888] bg-white" />
      {/* row-end marks */}
      <span className="absolute top-[16px] right-0 size-[3px] rounded-full bg-[#777]" />
      <span className="absolute top-[67px] right-0 size-[3px] rounded-full bg-[#777]" />
      <span className="absolute top-[116px] right-0 size-[3px] rounded-full bg-[#777]" />

      <div className="absolute top-[1px] left-full ml-[15px] flex flex-col items-center gap-3">
        <button aria-label="收起工具" className="-mb-[4px] flex size-[18px] items-center justify-center rounded-full border border-[#bfbfbf] bg-[#fafafa] text-[#888]">
          <Icon size={10}><path d="M0 5h10" strokeWidth="2" /></Icon>
        </button>
        <FloatButton label="布局选项">
          <path d="M1 1.500h16M1 4.500h16M1 7.500h3M14 7.500h3M1 10.500h3M14 10.500h3M1 13.500h16M1 16.500h16" />
          <path d="M12 5.500v2.500H7.500L6 9.500M7.500 8v4M11.500 8v4M12 6.500h2" stroke="#4b86dd" strokeWidth="1.600" />
        </FloatButton>
        <FloatButton label="形状样式">
          <path d="M9 8.500 15 2c1.500-1 3 .5 2 2l-6 6.500z" />
          <path d="M8.500 8c-2 0-3 1-3.500 3s-1.500 4-4 4.500c4 1.500 9 .5 10-5z" stroke="#4b86dd" fill="#cfe0fa" />
        </FloatButton>
        <FloatButton label="形状填充">
          <path d="M9 0 2 7l7 6.500L16 7zM0 5.500h9M17 7v5" />
          <path d="M.5 15h17v2.500H.5z" stroke="#8a8a3a" strokeWidth="0.600" fill="#fbf312" />
        </FloatButton>
        <FloatButton label="形状轮廓">
          <path d="M1.500 14V1.500h15V14M3.500 14V3.500h11V14" />
          <path d="M1 16.500h16" stroke="#0000f0" strokeWidth="2" />
        </FloatButton>
        <FloatButton label="推荐">
          <path d="M6.500 14c-2.500-1.500-4-3.500-4-6a6.500 6.500 0 0 1 13 0c0 2.500-1.500 4.500-4 6v3h-5zM6.500 14.500h5" />
          <path d="M10 3.500 6 9h2.500L8 13l4-5.500H9.500z" fill="#fbc02d" stroke="#e08a1c" strokeWidth="0.800" />
        </FloatButton>
      </div>
    </div>
  );
}

function ScrollBar() {
  return (
    <div className="flex w-[14px] shrink-0 flex-col items-center bg-[#ebecf1] text-[#8a95b2]">
      <div className="w-full bg-[#f6f7f9] pt-[5px] pb-2 pl-[2px]">
        <Icon size={10} className="text-[#a9b2c9]">
          <path d="M2 1.500h6M5 1v4M1 6.500h8M1.500 6v3M5 6v3M8.500 6v3" strokeWidth="2" />
        </Icon>
      </div>
      <Icon size={8}><path d="M1 6h6L4 3z" fill="currentColor" stroke="none" /></Icon>
      <div className="mt-2 mb-[216px] w-3 flex-1 rounded-full bg-[#d3d6df]" />
      <Icon size={8}><path d="M1 3h6L4 6z" fill="currentColor" stroke="none" /></Icon>
      <Icon size={10} className="mt-2"><path d="M2 5h6L5 2zM2 9h6L5 6z" fill="currentColor" stroke="none" /></Icon>
      <Icon size={8} className="mt-[10px]"><rect x="1.500" y="1.500" width="5" height="5" rx="1" /></Icon>
      <Icon size={10} className="mt-[6px] mb-[10px]"><path d="M2 1h6L5 4zM2 5h6L5 8z" fill="currentColor" stroke="none" /></Icon>
    </div>
  );
}

const SIDE_ICONS: [string, ReactNode][] = [
  ["新手帮助", <g key="a"><path d="M15 1c-4 0-6.500 1.500-8.500 4.500L3 6 1 8.500l3.500.5L7 11.500l.5 3.500 2.500-2 .5-3.500C13.500 7.500 15 5 15 1zM4 11l-2.500 2M6 13l-2 2.500M2.500 10 1 11" stroke="#5a6a94" /><circle cx="10.500" cy="5.500" r="1.300" stroke="#5a6a94" /></g>],
  ["样式", <path d="M5 9 12.500 1.500 15 4 8 11.500M1 14.500h14M1.500 14c.5-3 1-5 3.500-5 2 0 3.500 1.500 3 3-.5 1.500-2.500 2-6.500 2z" key="b" />],
  ["选择", <path d="M3.500 1v13l3.200-3 2.300 4.500 2-1-2.300-4.500h5z" key="c" />],
  ["属性", <g key="d"><path d="M5 3.500h11M0 12.500h9M14 12.500h2" /><circle cx="2.800" cy="3.500" r="2" /><circle cx="11.500" cy="12.500" r="2" /></g>],
  ["帮助", <g key="e"><circle cx="8" cy="8" r="7.200" /><path d="M5.500 6.500c0-3.500 5-3.500 5 0 0 2-2.500 2-2.500 4M8 11.500V13" /></g>],
  ["稻壳", <path d="M7 14.500H2.500V8M14.500 7V5L13 2.500H3L1 5v2l2 1.500L5 7l2 1.500L9 7M11 14.500c-1-3-.5-5 1-6.500 1 2 1 4-.5 6.500-1-2-2.500-2.500-3.500-2.500 0 2 1 3 3.500 3 2 0 4-1 4-4-2 .5-3 1.500-3.500 3.500" key="f" />],
  ["智能", <path d="M5.500 13A6.500 6.500 0 1 1 10.500 13v2.500h-5zM9 3.500 5.500 8H8l-1 4 3.500-4.500H8z" key="g" />],
];

function SideBar() {
  return (
    <aside className="flex w-[45px] shrink-0 flex-col items-center border-l-2 border-[#e4e6ec] pt-2 pr-[2px] text-[#3a4458]">
      <Icon size={20} className="text-[#c5c8ce]"><path d="M0 3.500h20M0 6.500h20" /></Icon>
      <div className="mt-2 flex flex-col gap-5">
        {SIDE_ICONS.map(([label, icon]) => (
          <button key={label} aria-label={label}><Icon>{icon}</Icon></button>
        ))}
      </div>
      <button aria-label="更多" className="mt-auto mb-[10px]">
        <Icon><circle cx="2.500" cy="8" r="1.500" /><circle cx="8" cy="8" r="1.500" /><circle cx="13.500" cy="8" r="1.500" /></Icon>
      </button>
    </aside>
  );
}

/* ---------- status bar ---------- */

function StatusBar() {
  const [zoom, setZoom] = useState(49);
  return (
    <footer className="flex h-[29px] shrink-0 items-center border-t border-[#dfe2e8] bg-[#f5f6f9] pl-2.5 text-xs/[17px] text-[#262f40]">
      <span>页面: 1/1</span>
      <span className="ml-4">字数: 0</span>
      <button className="ml-2 flex h-6 items-center gap-[3px] bg-[#e6eefb] px-[2px]">
        <Icon><path d="M8 2 6.500 1.500H1.500v12h5L8 14.500l1.500-1h5v-12h-5zM4.500 7.500 7 10l5-5" /></Icon>
        拼写检查
      </button>
      <Caret className="ml-1" />
      <Divider className="mx-[5px] h-3.5" />
      <button className="flex items-center gap-[3px] pl-[2px]">
        <Icon><path d="M8 2 6.500 1.500H1.500v12h5L8 14.500l1.500-1h5v-12h-5zM5.500 5l5 5M10.500 5l-5 5" /></Icon>
        文档校对
      </button>
      <Divider className="ml-2.5 h-3.5" />

      <div className="ml-auto flex items-center pr-[15px] text-[#333d50]">
        <button aria-label="护眼模式">
          <Icon size={18}>
            <path d="M1 10.500c4-5.500 12-5.500 16 0-4 5.500-12 5.500-16 0zM9 1v3M3.500 2.500l1.500 2.500M14.500 2.500 13 5" />
            <circle cx="9" cy="10.500" r="2.700" />
          </Icon>
        </button>
        <Divider className="mr-[11px] ml-[10px] h-3.5" />
        <button aria-label="页面视图" className="flex h-6 w-[23px] items-center justify-center bg-[#d9dde4]">
          <Icon><path d="M1.500 1.500h9l4 3.500v9.500h-13zM4.500 7.500h7M4.500 10.500h7" /></Icon>
        </button>
        <div className="ml-[7px] flex items-center gap-[10px]">
          <button aria-label="大纲"><Icon><path d="M1 2.500h2M5 2.500h11M3 6.500h2M7 6.500h9M3 10.500h2M7 10.500h9M1 14.500h2M5 14.500h11" /></Icon></button>
          <button aria-label="阅读版式"><Icon><path d="M8 3 6.500 1.500h-5v12h5L8 14.500l1.500-1h5v-12h-5zM8 3v11" /></Icon></button>
          <button aria-label="Web版式">
            <Icon><circle cx="8" cy="8" r="7" /><ellipse cx="8" cy="8" rx="3.200" ry="7" /><path d="M1 8h14M2 4.500h12M2 11.500h12M8 1v14" strokeWidth="0.900" /></Icon>
          </button>
          <button aria-label="写作模式"><Icon><path d="M1.500 13 4 8l8-7 3 2.500-7.500 8zM4 8l3.500 3.500M0 14.500h15M9 10l5-1.500" /></Icon></button>
        </div>
        <Divider className="mr-[22px] ml-[6px] h-3.5" />
        <button aria-label="适应页面">
          <Icon size={15}><path d="M.5 4.500v-4H4M11 .5h3.500v4M14.500 10.500v4H11M4 14.500H.5v-4M4.500 4.500h6v6h-6z" /></Icon>
        </button>
        <span className="ml-2">100%</span>
        <Caret className="ml-[5px]" />
        <button aria-label="缩小" className="ml-3"><Icon size={12}><path d="M1 6h10" strokeWidth="2" /></Icon></button>
        <input
          type="range"
          aria-label="显示比例"
          value={zoom}
          onChange={(e) => setZoom(Number(e.target.value))}
          className="mx-[10px] h-px w-[141px] appearance-none bg-linear-to-r from-[#46536d] from-50% to-[#d3d6dc] to-50% [&::-webkit-slider-thumb]:size-3 [&::-webkit-slider-thumb]:appearance-none [&::-webkit-slider-thumb]:rounded-full [&::-webkit-slider-thumb]:border [&::-webkit-slider-thumb]:border-[#555] [&::-webkit-slider-thumb]:bg-[#f5f6f9]"
        />
        <button aria-label="放大"><Icon size={12}><path d="M6 1v10M1 6h10" strokeWidth="2" /></Icon></button>
        <button aria-label="全屏" className="ml-3"><Icon size={15}><path d="M1 5V1h4M10 1h4v4M14 10v4h-4M5 14H1v-4M1 1l4.500 4.500M14 1 9.500 5.500M14 14 9.500 9.500M1 14l4.500-4.500" /></Icon></button>
      </div>
    </footer>
  );
}

/* ---------- overlays ---------- */

function Arrows() {
  return (
    <svg
      width="500"
      height="360"
      viewBox="0 0 500 360"
      className="pointer-events-none absolute top-0 left-0 z-30 drop-shadow-[2px_3px_2px_rgba(0,0,0,0.45)]"
      aria-hidden="true"
    >
      <g stroke="#fe0000" strokeWidth="3" strokeLinecap="round" fill="#fe0000">
        <path d="m105 188 60-49M481 157l-92-70M456 340 352 252" />
        <g stroke="none">
          <path d="m181 125-13 24-4-9-10-5z" />
          <path d="m366 69 24 10-5 6-1 13z" />
          <path d="m330 235 24 10-5 7-3 10z" />
        </g>
      </g>
    </svg>
  );
}

function Watermark() {
  return (
    <div className="pointer-events-none absolute right-0 bottom-0 z-10 h-[85px] w-[160px] overflow-hidden whitespace-nowrap">
      <div className="pl-[60px] text-[#9c9ea1]/80">
        <p className="text-[20px] leading-7">激活 Windows</p>
        <p className="text-[15px] leading-5">转到“设置”以激活 Windows。</p>
      </div>
      <div className="absolute bottom-[5px] left-0 flex items-end">
        <svg width="43" height="43" viewBox="0 0 43 43" aria-hidden="true">
          <defs>
            <linearGradient id="jg" x1="0" y1="1" x2="1" y2="0">
              <stop offset="0" stopColor="#2c74c4" />
              <stop offset="1" stopColor="#67c1f0" />
            </linearGradient>
            <linearGradient id="jy" x1="0" y1="1" x2="1" y2="0">
              <stop offset="0" stopColor="#e8d34c" />
              <stop offset="1" stopColor="#4ab861" />
            </linearGradient>
          </defs>
          <path d="M42 4C30-1 8 6 2 21c-3 8 0 13 6 15-3-6-1-13 6-20C21 9 31 5 42 4z" fill="url(#jg)" />
          <path d="M8 35c12 0 24-10 25-19-8-1-17 4-19 11 3-4 8-7 12-7-1 5-8 12-18 15z" fill="#62ace2" />
          <path d="M3 42c14 2 34-3 38-17 1-5-2-9-7-9 2 10-9 22-31 26z" fill="url(#jy)" />
        </svg>
        <div className="font-bold">
          <p className="pb-1 text-[21px] leading-5 text-[#4d97d8]/90">极光下载站</p>
          <p className="pl-[2px] font-['Liberation_Sans',sans-serif] text-[16px] leading-5 text-[#55bf70]/90">www.xz7.com</p>
        </div>
      </div>
    </div>
  );
}

export default function App() {
  return (
    <div className="relative flex h-screen flex-col overflow-hidden bg-[#f6f7f9] font-['Noto_Sans','Noto_Sans_CJK_SC',sans-serif]">
      <TitleBar />
      <MenuRow />
      <Ribbon />
      <main className="flex min-h-0 flex-1">
        <div className="flex min-w-0 flex-1 justify-center overflow-hidden pt-[19px] pl-0.5">
          <Page />
        </div>
        <ScrollBar />
        <SideBar />
      </main>
      <StatusBar />
      <Arrows />
      <Watermark />
    </div>
  );
}
